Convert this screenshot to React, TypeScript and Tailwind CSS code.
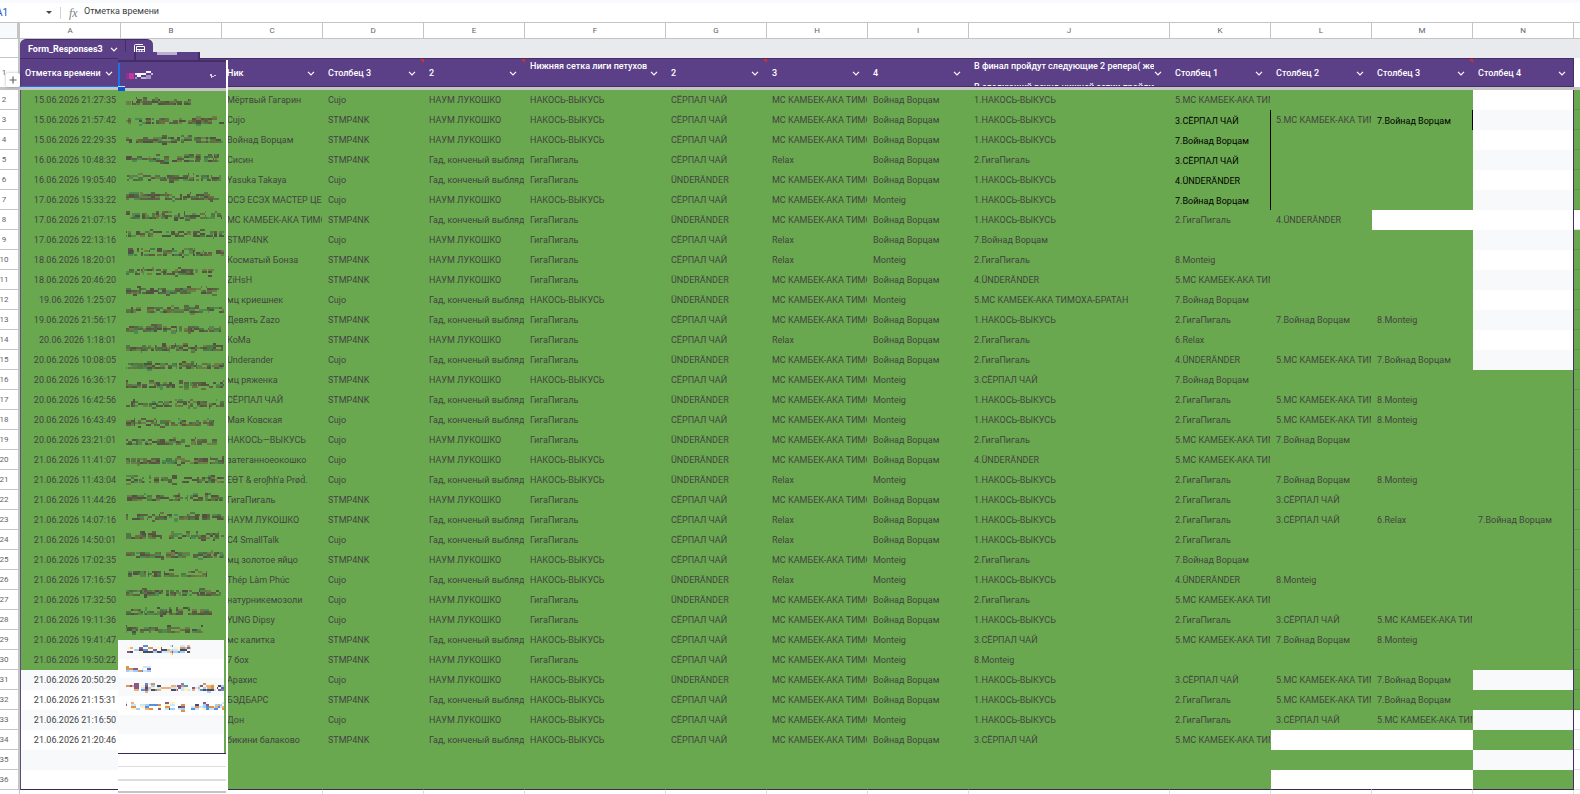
import React from 'react';
import { clsx } from 'clsx';

const LETTERS = ['A', 'B', 'C', 'D', 'E', 'F', 'G', 'H', 'I', 'J', 'K', 'L', 'M', 'N'];

interface HeaderInfo {
  lines: string[];
  note?: boolean;
}

const HEADERS: HeaderInfo[] = [
  { lines: ['Отметка времени'] },
  { lines: [] },
  { lines: ['Ник'] },
  { lines: ['Столбец 3'], note: true },
  { lines: ['2'], note: true },
  { lines: ['Нижняя сетка лиги петухов', ''] },
  { lines: ['2'], note: true },
  { lines: ['3'] },
  { lines: ['4'] },
  { lines: ['В финал пройдут следующие 2 репера( же', 'В следующий раунд нижней сетки пройдут'] },
  { lines: ['Столбец 1'] },
  { lines: ['Столбец 2'] },
  { lines: ['Столбец 3'], note: true },
  { lines: ['Столбец 4'] },
];

// Answers repeat all over the form, so rows below use short keys
const S = 'STMP4NK';
const C = 'Cujo';
const N = 'НАУМ ЛУКОШКО';
const G = 'Гад, конченый выблядок';
const NV = 'НАКОСЬ-ВЫКУСЬ';
const GP = 'ГигаПигаль';
const SC = 'СЁРПАЛ ЧАЙ';
const U = 'ÜNDERÄNDER';
const MC = 'МС КАМБЕК-АКА ТИМОХА-БРАТАН';
const R = 'Relax';
const V = 'Войнад Ворцам';
const M = 'Monteig';
const p1 = '1.' + NV;
const p2 = '2.' + GP;
const p3 = '3.' + SC;
const p4 = '4.' + U;
const p5 = '5.' + MC;
const p6 = '6.' + R;
const p7 = '7.' + V;
const p8 = '8.' + M;

// time, nick, D, E, F, G, H, I, J, K, L, M, N
const ROWS: string[][] = [
  ['15.06.2026 21:27:35', 'Мёртвый Гагарин', C, N, NV, SC, MC, V, p1, p5],
  ['15.06.2026 21:57:42', 'Cujo', S, N, NV, SC, MC, V, p1, p3, p5, p7],
  ['15.06.2026 22:29:35', 'Войнад Ворцам', S, N, NV, SC, MC, V, p1, p7],
  ['16.06.2026 10:48:32', 'Сисин', S, G, GP, SC, R, V, p2, p3],
  ['16.06.2026 19:05:40', 'Yasuka Takaya', C, G, GP, U, MC, V, p1, p4],
  ['17.06.2026 15:33:22', 'ОСЭ ЕСЭХ МАСТЕР ЦЕРЕМОНИИ', C, N, NV, SC, MC, M, p1, p7],
  ['17.06.2026 21:07:15', MC, S, G, GP, U, MC, V, p1, p2, p4],
  ['17.06.2026 22:13:16', 'STMP4NK', C, N, GP, SC, R, V, p7],
  ['18.06.2026 18:20:01', 'Косматый Бонза', S, N, GP, SC, R, M, p2, p8],
  ['18.06.2026 20:46:20', 'ZiHsH', S, N, GP, U, MC, V, p4, p5],
  ['19.06.2026 1:25:07', 'мц криешнек', C, G, NV, U, MC, M, p5, p7],
  ['19.06.2026 21:56:17', 'Девять Zazo', S, G, GP, SC, MC, V, p1, p2, p7, p8],
  ['20.06.2026 1:18:01', 'КоМа', S, N, GP, SC, R, V, p2, p6],
  ['20.06.2026 10:08:05', 'Underander', C, G, GP, U, MC, V, p2, p4, p5, p7],
  ['20.06.2026 16:36:17', 'мц ряженка', S, N, NV, SC, MC, M, p3, p7],
  ['20.06.2026 16:42:56', 'СЁРПАЛ ЧАЙ', S, G, GP, U, MC, M, p1, p2, p5, p8],
  ['20.06.2026 16:43:49', 'Мая Ковская', C, G, GP, SC, MC, M, p1, p2, p5, p8],
  ['20.06.2026 23:21:01', 'НАКОСЬ—ВЫКУСЬ', C, N, GP, U, MC, V, p2, p5, p7],
  ['21.06.2026 11:41:07', 'затеганноеокошко', C, N, NV, U, MC, V, p4, p5],
  ['21.06.2026 11:43:04', "EѲT & eroʃhh'a Prød́.", C, G, NV, U, R, M, p1, p2, p7, p8],
  ['21.06.2026 11:44:26', 'ГигаПигаль', S, N, GP, SC, MC, V, p1, p2, p3],
  ['21.06.2026 14:07:16', 'НАУМ ЛУКОШКО', S, G, GP, SC, R, V, p1, p2, p3, p6, p7],
  ['21.06.2026 14:50:01', 'C4 SmallTalk', C, G, GP, SC, R, V, p1, p2],
  ['21.06.2026 17:02:35', 'мц золотое яйцо', S, N, NV, SC, MC, M, p2, p7],
  ['21.06.2026 17:16:57', 'Thép Làm Phúc', C, G, NV, U, R, M, p1, p4, p8],
  ['21.06.2026 17:32:50', 'натурникемозоли', C, N, GP, U, MC, V, p2, p5],
  ['21.06.2026 19:11:36', 'YUNG Dipsy', C, N, GP, SC, MC, V, p1, p2, p3, p5],
  ['21.06.2026 19:41:47', 'мс калитка', S, G, NV, SC, MC, M, p3, p5, p7, p8],
  ['21.06.2026 19:50:22', '7 бох', S, N, GP, SC, MC, M, p8],
  ['21.06.2026 20:50:29', 'Арахис', C, N, NV, U, MC, V, p1, p3, p5, p7],
  ['21.06.2026 21:15:31', 'БЭДБАРС', S, G, NV, SC, MC, V, p1, p2, p5, p7],
  ['21.06.2026 21:16:50', 'Дон', C, N, NV, SC, MC, M, p1, p2, p3, p5],
  ['21.06.2026 21:20:46', 'бикини балаково', S, G, NV, SC, MC, V, p3, p5],
  [],
  [],
];

const cellBg = (col: string, row: number) => {
  const band = row % 2 ? 'bg-[#f8f9fb]' : 'bg-white';
  if (col === 'A' && row > 30) return band;
  if (col === 'N' && (row < 16 || [31, 33, 35].includes(row))) return band;
  if (col === 'M' && row === 8) return band;
  if ((col === 'L' || col === 'M') && (row === 34 || row === 36)) return band;
  return 'bg-[#6aa84f]';
};

// cells pasted with another format
const isPasted = (col: string, row: number) =>
  (col === 'K' && row >= 3 && row <= 7) || (col === 'M' && row === 3);

const Chevron: React.FC<{ className?: string }> = ({ className }) => (
  <svg viewBox="0 0 8 5" className={clsx('h-[5px] w-2', className)} fill="none" stroke="currentColor" strokeWidth="1.2">
    <path d="M1 0.8 L4 3.8 L7 0.8" />
  </svg>
);

const TableIcon: React.FC = () => (
  <svg viewBox="0 0 12 11" className="h-[11px] w-3" fill="none" stroke="white" strokeWidth="1">
    <path d="M0.5 9 V1.5 Q0.5 0.5 1.5 0.5 H9" />
    <path d="M2.5 2.5 H10.5 V10.5 H2.5 Z M2.5 5.5 H10.5 M2.5 8 H10.5 M5.2 5.5 V10.5 M7.8 5.5 V10.5" />
  </svg>
);

const GREEN_INK = ['#54543f', '#5c5b46', '#505043', '#4c7a45', '#4b8a50', '#6f7d45', '#5a6343', '#68703f'];
const COLOR_INK = ['#4d4a5e', '#5b8fd9', '#9ed0ff', '#f0b070', '#fff3b8', '#8a5a86', '#c9e6ff', '#d99550'];
const HEAD_INK = ['#e8e0ef', '#a78fc4', '#f5f2f8', '#c3b3d6'];

interface MosaicProps {
  seed: number;
  width: number;
  ink: string[];
}

// Pixelated text: dense at x-height, sparse above and below
const Mosaic: React.FC<MosaicProps> = ({ seed, width, ink }) => {
  let s = seed * 7919 + 13;
  const rnd = () => {
    s = (s * 1103515245 + 12345) % 2147483648;
    return s / 2147483648;
  };
  const bands = [
    { y: 0, h: 2, chance: 0.14 },
    { y: 2, h: 2, chance: 0.62 },
    { y: 4, h: 2, chance: 0.74 },
    { y: 6, h: 2, chance: 0.76 },
    { y: 8, h: 2, chance: 0.07 },
  ];
  const rects: React.ReactNode[] = [];
  for (let x = 0; x < width; ) {
    const w = 1 + Math.floor(rnd() * 5);
    const gap = w < 3 && rnd() < 0.3;
    bands.forEach(({ y, h, chance }) => {
      const color = ink[Math.floor(rnd() * ink.length)];
      if (rnd() < chance && !gap) {
        rects.push(<rect key={x + '-' + y} x={x} y={y} width={Math.min(w, width - x)} height={h} fill={color} />);
      }
    });
    x += w;
  }
  return (
    <svg width={width} height={10} shapeRendering="crispEdges" className="shrink-0" aria-hidden="true">
      {rects}
    </svg>
  );
};

const GREEN_WIDTHS = [
  65, 98, 97, 93, 95, 93, 96, 98, 98, 88, 93, 98, 95, 98, 98, 98, 98, 88, 91, 98, 98, 97, 98, 98, 98, 81, 95, 86, 77,
];
const WHITE_WIDTHS = [65, 25, 98, 98, 0, 0];

// The e-mail column is covered by a censored strip
const CensoredStrip: React.FC = () => (
  <div className="absolute top-[29px] bottom-0 left-[118px] flex w-[110px] flex-col">
    <div className="flex h-2 w-[82px] shrink-0">
      <div className="w-4 bg-[#5b3f87]" />
      <div className="flex w-[66px] justify-center border-x-2 border-[#432f66] bg-[#5b3f87]">
        <div className="h-[3px] w-5 bg-[#bdb0cf]" />
      </div>
    </div>
    <div className="flex min-h-0 flex-1 flex-col overflow-hidden border-r-2 border-white">
      <div className="flex h-7 shrink-0 items-center justify-between border-t-2 border-[#432f66] bg-[#5b3f87] pt-0.5 pr-2.5 pl-2">
        <div className="flex items-center">
          <svg width="8" height="6" shapeRendering="crispEdges" aria-hidden="true">
            <path d="M0 0 H3 V6 H0 Z" fill="#8e2f9e" />
            <path d="M3 0 H8 V6 H3 Z" fill="#c2399a" />
          </svg>
          <Mosaic seed={5} width={19} ink={HEAD_INK} />
        </div>
        <svg width="6" height="4" shapeRendering="crispEdges" aria-hidden="true">
          <path d="M0 0 H2 V2 H6 V1 H4 V3 H2 V4 H1 V2 H0 Z" fill="#d8cfe4" />
        </svg>
      </div>
      <div className="h-[3px] shrink-0 bg-[#c4c4c4]" />
      <div className="flex h-[549px] shrink-0 flex-col bg-[#6aa84f] pt-0.5 pl-2">
        {GREEN_WIDTHS.map((w, i) => (
          <div key={i} className="flex flex-1 items-center">
            <Mosaic seed={i + 1} width={w} ink={GREEN_INK} />
          </div>
        ))}
      </div>
      <div className="flex h-[114px] shrink-0 flex-col border-b border-[#372a55] bg-[#6aa84f] pr-0.5">
        {WHITE_WIDTHS.map((w, i) => (
          <div key={i} className={clsx('flex flex-1 items-center pt-0.5 pl-2', i % 2 ? 'bg-white' : 'bg-[#f8f9fb]')}>
            <Mosaic seed={i + 60} width={w} ink={COLOR_INK} />
          </div>
        ))}
      </div>
      <div className="h-[13px] shrink-0 border-b border-[#dddddd] bg-white" />
      <div className="h-[14px] shrink-0 border-b-2 border-[#dddddd] bg-white" />
      <div className="h-3 shrink-0 border-b-2 border-[#c4c4c4] bg-white" />
      <div className="flex-1 bg-white" />
    </div>
  </div>
);

const FormulaBar: React.FC = () => (
  <div className="flex h-5 items-center border-b border-[#c4c4c4] text-[9px] text-[#3c4043]">
    <input
      aria-label="Ячейка"
      defaultValue="A1"
      className="-ml-1 w-[49px] bg-transparent text-[10px] text-[#1155cc] outline-none"
    />
    <button type="button" aria-label="Диапазоны" className="flex w-2 justify-center">
      <svg viewBox="0 0 6 3" className="h-[3px] w-1.5" fill="#444746">
        <path d="M0 0 H6 L3 3 Z" />
      </svg>
    </button>
    <div className="ml-[7px] h-3 w-px bg-[#d0d4d9]" />
    <span className="ml-2 w-[15px] font-['Liberation_Serif',serif] text-[12px] text-[#7a7d80] italic">fx</span>
    <input
      aria-label="Формула"
      defaultValue="Отметка времени"
      className="min-w-0 flex-1 bg-transparent pb-px outline-none"
    />
  </div>
);

const NameTab: React.FC = () => (
  <div className="flex h-[19px] text-white">
    <button
      type="button"
      className="flex w-[106px] items-center justify-between rounded-tl-md border-t border-r border-[#432f66] bg-[#5b3f87] pt-px pr-[7px] pl-2 text-[9px] font-bold"
    >
      Form_Responses3
      <Chevron />
    </button>
    <button
      type="button"
      aria-label="Параметры таблицы"
      className="flex w-[27px] items-center justify-center rounded-tr-md border-t border-[#432f66] bg-[#5b3f87]"
    >
      <TableIcon />
    </button>
  </div>
);

const HeaderCell: React.FC<{ info: HeaderInfo; first: boolean; last: boolean }> = ({ info, first, last }) => (
  <th className="h-8 p-0 text-left align-top font-medium">
    <div
      className={clsx(
        'relative flex h-[29px] items-center justify-between overflow-hidden border-t border-b bg-[#5b3f87] pt-0.5 pl-[5px] text-[9px] whitespace-nowrap text-white',
        first ? 'border-t-[#432f66] border-b-[#1a73e8]' : 'border-[#432f66]',
        last ? 'border-r pr-[7px]' : 'pr-2'
      )}
    >
      {info.lines.length > 1 ? (
        <div className="flex h-full min-w-0 flex-col gap-[11px] overflow-hidden leading-[10px]">
          {info.lines.map((line, i) => (
            <span key={i}>{line}</span>
          ))}
        </div>
      ) : (
        <span>{info.lines[0]}</span>
      )}
      <button type="button" aria-label="Меню столбца" className="shrink-0">
        <Chevron />
      </button>
      {info.note && (
        <svg viewBox="0 0 4 4" className="absolute top-0 right-0 size-1" fill="#d93025">
          <path d="M0 0 H4 V4 Z" />
        </svg>
      )}
    </div>
    <div className="h-[3px] bg-[#c4c4c4]" />
  </th>
);

const RowNumber: React.FC<{ n: number }> = ({ n }) => (
  <th className="h-5 border-r-2 border-b border-[#c4c4c4] bg-white p-0 text-[8px] font-normal text-[#5f6368]">
    <div className="flex w-2 justify-center">{n}</div>
  </th>
);

const BodyRow: React.FC<{ cells: string[]; n: number }> = ({ cells, n }) => (
  <tr>
    <RowNumber n={n} />
    {LETTERS.map((col, i) => {
      const text = i === 0 ? cells[0] : i === 1 ? '' : cells[i - 1];
      const pasted = isPasted(col, n);
      return (
        <td
          key={col}
          className={clsx(
            'h-5 border-r p-0 pl-[5px]',
            cellBg(col, n),
            col === 'A' && 'border-l border-l-[#5f4b80] pr-1 text-right',
            n === 36 && 'border-b border-b-[#372a55]',
            col === 'N' ? 'border-r-[#432f66]' : pasted ? 'border-r-black' : 'border-r-transparent',
            pasted ? 'pt-0.5 leading-[18px] text-black' : 'leading-[19px]'
          )}
        >
          <div className="overflow-hidden whitespace-nowrap">{text}</div>
        </td>
      );
    })}
    <td
      className={clsx(
        'h-5 border-b p-0',
        n === 8 || n > 32 ? 'border-[#e0e0e0] bg-white' : 'border-[#5d9645] bg-[#6aa84f]'
      )}
    />
  </tr>
);

export default function App() {
  return (
    <div className="flex h-screen flex-col overflow-hidden bg-white font-['Roboto',sans-serif] text-[9px] text-[#434343]">
      <div className="h-[3px] shrink-0 bg-[#f8fafd]" />
      <FormulaBar />
      <div className="relative min-h-0 flex-1 overflow-hidden">
        <table className="w-full table-fixed border-separate border-spacing-0">
          <colgroup>
            <col className="w-5" />
            {LETTERS.map((col) => (
              <col key={col} className={col === 'F' ? 'w-[141px]' : col === 'J' ? 'w-[201px]' : 'w-[101px]'} />
            ))}
            <col />
          </colgroup>
          <thead>
            <tr>
              <th className="h-4 border-r-3 border-b border-[#c4c4c4] bg-[#f8f9fa] p-0" />
              {LETTERS.map((col) => (
                <th
                  key={col}
                  className="h-4 border-r border-b border-[#c4c4c4] bg-white p-0 text-[8px] leading-[15px] font-normal text-[#5f6368]"
                >
                  {col}
                </th>
              ))}
              <th className="h-4 border-b border-[#c4c4c4] p-0" />
            </tr>
            <tr>
              <th className="h-[19px] border-r-2 border-b border-[#c4c4c4] bg-white p-0" />
              <td colSpan={15} className="h-[19px] bg-[#e8eaed] p-0">
                <NameTab />
              </td>
            </tr>
            <tr>
              <th className="h-8 border-r-2 border-b-3 border-[#c4c4c4] bg-white p-0 text-[8px] font-normal text-[#5f6368]">
                <div className="flex w-2 justify-center">1</div>
              </th>
              {HEADERS.map((info, i) => (
                <HeaderCell key={i} info={info} first={i === 0} last={i === 13} />
              ))}
              <th className="h-8 border-b-3 border-[#c4c4c4] bg-white p-0" />
            </tr>
          </thead>
          <tbody>
            {ROWS.map((cells, i) => (
              <BodyRow key={i} cells={cells} n={i + 2} />
            ))}
            <tr>
              <th className="h-5 border-r border-[#c4c4c4] p-0" />
              {LETTERS.map((col) => (
                <td key={col} className="h-5 border-r border-[#e0e0e0] p-0" />
              ))}
              <td />
            </tr>
          </tbody>
        </table>

        <CensoredStrip />

        {/* active cell edge and fill handle */}
        <div className="absolute top-10 left-[118px] h-6 w-0.5 bg-[#1a73e8]" />
        <div className="absolute top-[63px] left-[118px] h-[5px] w-[7px] border-t border-[#c9dcf8] bg-[#0b57d0]" />

        <button
          type="button"
          aria-label="Развернуть строки"
          className="absolute top-[50px] left-1.5 flex size-[14px] items-center justify-center rounded-xs bg-white shadow-[0_0_3px_rgba(0,0,0,0.3)]"
        >
          <svg viewBox="0 0 8 8" className="size-2" stroke="#5f6368" strokeWidth="1.2">
            <path d="M4 0.5 V7.5 M0.5 4 H7.5" />
          </svg>
        </button>
      </div>
    </div>
  );
}
